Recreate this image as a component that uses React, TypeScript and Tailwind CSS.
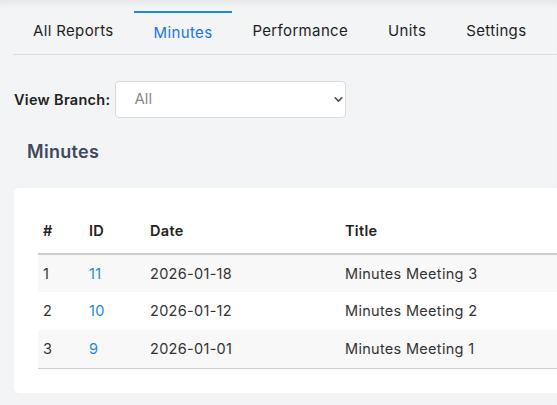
import { ChevronDown } from "lucide-react";

const tabs = ["All Reports", "Minutes", "Performance", "Units", "Settings"];

const rows = [
  { n: 1, id: 11, date: "2026-01-18", title: "Minutes Meeting 3" },
  { n: 2, id: 10, date: "2026-01-12", title: "Minutes Meeting 2" },
  { n: 3, id: 9, date: "2026-01-01", title: "Minutes Meeting 1" },
];

export default function App() {
  return (
    <div
      className="min-h-[405px] w-full overflow-hidden bg-[#f3f4f6] text-[#222] shadow-[inset_0_8px_8px_-6px_rgba(0,0,0,0.08)]"
      style={{ fontFamily: "Inter, 'Open Sans', sans-serif" }}
    >
      {/* Tabs */}
      <nav className="ml-[13px] flex border-b border-[#dcdde0] pt-[11px]">
        {tabs.map((t) => {
          const active = t === "Minutes";
          return (
            <div
              key={t}
              className={`flex h-[43px] items-center border-t-2 px-5 text-[15px] tracking-[0.35px] ${
                active ? "border-[#1e88e5] pb-[0px] text-[#1a73e8]" : "border-transparent pb-[4px] text-[#1f1f1f]"
              }`}
            >
              {t}
            </div>
          );
        })}
      </nav>

      {/* Branch filter */}
      <div className="mt-[26px] flex items-center pl-[14px]">
        <label className="mr-[5px] text-[14.5px] font-semibold tracking-[0.3px] text-[#222]">View Branch:</label>
        <div className="relative">
          <select className="h-[37px] w-[231px] appearance-none rounded-[4px] border border-[#d9dbde] bg-white pl-[18px] text-[15px] text-[#888] outline-none">
            <option>All</option>
          </select>
          <ChevronDown
            className="pointer-events-none absolute right-[1px] top-[12px] h-[13px] w-[13px] text-[#555]"
            strokeWidth={3}
          />
        </div>
      </div>

      {/* Heading */}
      <h2 className="mt-[20px] pl-[27px] text-[18px] font-semibold tracking-[0.3px] text-[#3f4a5c]">Minutes</h2>

      {/* Card */}
      <div className="ml-[14px] mt-[23px] rounded-l-[5px] bg-white py-[24px] pl-[24px]">
        <table className="w-full border-collapse text-left text-[14.5px] tracking-[0.3px]">
          <thead>
            <tr className="h-[42px] border-b-2 border-[#cfcfcf]">
              <th className="w-[46px] pb-[4px] pl-[5px] font-semibold">#</th>
              <th className="w-[61px] pb-[4px] pl-[5px] font-semibold">ID</th>
              <th className="w-[195px] pb-[4px] pl-[5px] font-semibold">Date</th>
              <th className="pb-[4px] pl-[5px] font-semibold">Title</th>
            </tr>
          </thead>
          <tbody>
            {rows.map((r, i) => (
              <tr
                key={r.id}
                className={`h-[38px] text-[#333] ${i % 2 === 0 ? "bg-[#f8f8f8]" : "bg-white"} ${
                  i === rows.length - 1 ? "border-b border-[#cfcfcf]" : ""
                }`}
              >
                <td className="pl-[5px]">{r.n}</td>
                <td className="pl-[5px] text-[#2188e0]">{r.id}</td>
                <td className="pl-[5px]">{r.date}</td>
                <td className="pl-[5px]">{r.title}</td>
              </tr>
            ))}
          </tbody>
        </table>
      </div>
    </div>
  );
}
